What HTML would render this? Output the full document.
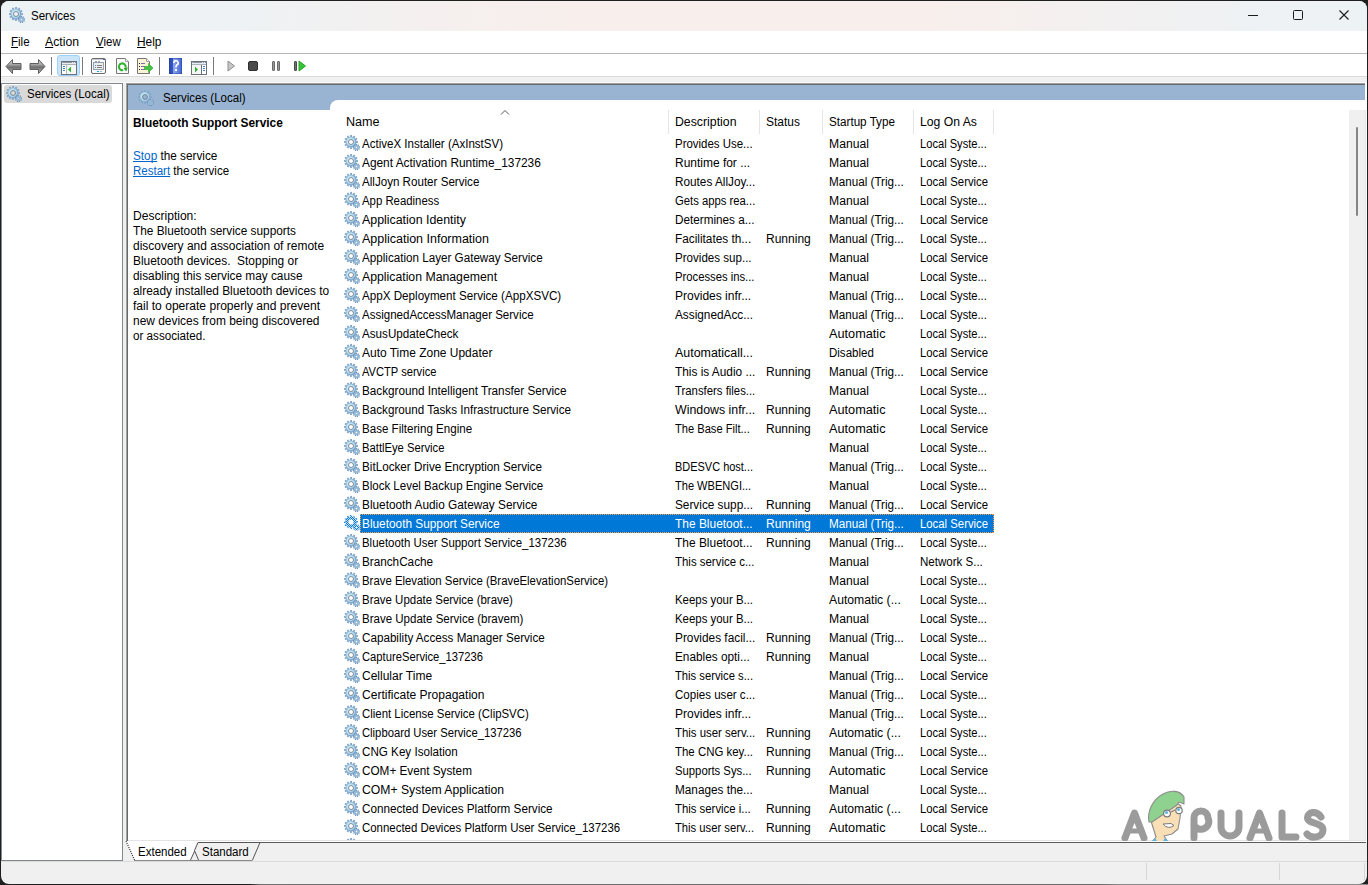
<!DOCTYPE html>
<html><head><meta charset="utf-8">
<style>
*{box-sizing:border-box}
html,body{margin:0;padding:0}
body{width:1368px;height:885px;background:#1f1f1f;position:relative;overflow:hidden;font-family:"Liberation Sans",sans-serif;font-size:12px;color:#000}
.win{position:absolute;left:0;top:0;width:1368px;height:885px;background:#f0f0f0;clip-path:inset(1px 1px 1px 1px round 8px);overflow:hidden}
.a{position:absolute}
.t{position:absolute;margin-top:1px;white-space:nowrap;line-height:15px;height:15px;transform:scaleX(0.96);transform-origin:0 0}
.e{letter-spacing:-0.4px}
.gi{position:absolute;width:16px;height:16px;overflow:visible}
.selbar{position:absolute;left:360px;width:634px;height:19px;background-color:#0078d7;background-image:repeating-linear-gradient(90deg,#f5a048 0 1px,transparent 1px 2px),repeating-linear-gradient(90deg,#f5a048 0 1px,transparent 1px 2px),repeating-linear-gradient(180deg,#f5a048 0 1px,transparent 1px 2px),repeating-linear-gradient(180deg,#f5a048 0 1px,transparent 1px 2px);background-size:100% 1px,100% 1px,1px 100%,1px 100%;background-position:0 0,0 100%,0 0,100% 0;background-repeat:no-repeat}
.sel .t{color:#fff}
u{text-decoration:underline;text-decoration-skip-ink:none}
</style></head><body>
<svg width="0" height="0" style="position:absolute">
<defs>
<radialGradient id="gr" cx="0.45" cy="0.45" r="0.6">
<stop offset="0" stop-color="#e6f8fd"/><stop offset="0.5" stop-color="#d2f0fa"/><stop offset="0.8" stop-color="#b2d8ee"/><stop offset="1" stop-color="#86adcf"/>
</radialGradient>
<linearGradient id="tg" gradientUnits="userSpaceOnUse" x1="0" y1="0" x2="0" y2="16"><stop offset="0" stop-color="#86a8ca"/><stop offset="1" stop-color="#4f7aa2"/></linearGradient>
<symbol id="gear" viewBox="0 0 16 16">
<g fill="url(#tg)"><rect x="6.15" y="0" width="1.8" height="2.3" transform="rotate(0 7 7)"/><rect x="6.15" y="0" width="1.8" height="2.3" transform="rotate(30 7 7)"/><rect x="6.15" y="0" width="1.8" height="2.3" transform="rotate(60 7 7)"/><rect x="6.15" y="0" width="1.8" height="2.3" transform="rotate(90 7 7)"/><rect x="6.15" y="0" width="1.8" height="2.3" transform="rotate(120 7 7)"/><rect x="6.15" y="0" width="1.8" height="2.3" transform="rotate(150 7 7)"/><rect x="6.15" y="0" width="1.8" height="2.3" transform="rotate(180 7 7)"/><rect x="6.15" y="0" width="1.8" height="2.3" transform="rotate(210 7 7)"/><rect x="6.15" y="0" width="1.8" height="2.3" transform="rotate(240 7 7)"/><rect x="6.15" y="0" width="1.8" height="2.3" transform="rotate(270 7 7)"/><rect x="6.15" y="0" width="1.8" height="2.3" transform="rotate(300 7 7)"/><rect x="6.15" y="0" width="1.8" height="2.3" transform="rotate(330 7 7)"/></g>
<circle cx="7" cy="7" r="4.05" fill="none" stroke="url(#gr)" stroke-width="3.1"/>
<circle cx="7" cy="7" r="2.5" fill="none" stroke="#62707e" stroke-width="0.8"/>
<g fill="#5f88b2"><rect x="11.95" y="8.9" width="1.1" height="1.9" transform="rotate(0 12.5 12.5)"/><rect x="11.95" y="8.9" width="1.1" height="1.9" transform="rotate(40 12.5 12.5)"/><rect x="11.95" y="8.9" width="1.1" height="1.9" transform="rotate(80 12.5 12.5)"/><rect x="11.95" y="8.9" width="1.1" height="1.9" transform="rotate(120 12.5 12.5)"/><rect x="11.95" y="8.9" width="1.1" height="1.9" transform="rotate(160 12.5 12.5)"/><rect x="11.95" y="8.9" width="1.1" height="1.9" transform="rotate(200 12.5 12.5)"/><rect x="11.95" y="8.9" width="1.1" height="1.9" transform="rotate(240 12.5 12.5)"/><rect x="11.95" y="8.9" width="1.1" height="1.9" transform="rotate(280 12.5 12.5)"/><rect x="11.95" y="8.9" width="1.1" height="1.9" transform="rotate(320 12.5 12.5)"/></g>
<circle cx="12.5" cy="12.5" r="1.8" fill="none" stroke="#94b8d6" stroke-width="2"/>
</symbol>
<pattern id="chk" patternUnits="userSpaceOnUse" width="2" height="2"><rect width="2" height="2" fill="#b9dcf0"/><rect width="1" height="1" fill="#0a78d6"/><rect x="1" y="1" width="1" height="1" fill="#0a78d6"/></pattern>
<symbol id="gsel" viewBox="0 0 16 16">
<g fill="url(#chk)"><rect x="6.1" y="0" width="1.8" height="2.3" transform="rotate(0 7 7)"/><rect x="6.1" y="0" width="1.8" height="2.3" transform="rotate(30 7 7)"/><rect x="6.1" y="0" width="1.8" height="2.3" transform="rotate(60 7 7)"/><rect x="6.1" y="0" width="1.8" height="2.3" transform="rotate(90 7 7)"/><rect x="6.1" y="0" width="1.8" height="2.3" transform="rotate(120 7 7)"/><rect x="6.1" y="0" width="1.8" height="2.3" transform="rotate(150 7 7)"/><rect x="6.1" y="0" width="1.8" height="2.3" transform="rotate(180 7 7)"/><rect x="6.1" y="0" width="1.8" height="2.3" transform="rotate(210 7 7)"/><rect x="6.1" y="0" width="1.8" height="2.3" transform="rotate(240 7 7)"/><rect x="6.1" y="0" width="1.8" height="2.3" transform="rotate(270 7 7)"/><rect x="6.1" y="0" width="1.8" height="2.3" transform="rotate(300 7 7)"/><rect x="6.1" y="0" width="1.8" height="2.3" transform="rotate(330 7 7)"/></g>
<circle cx="7" cy="7" r="4.05" fill="none" stroke="url(#chk)" stroke-width="3.1"/>
<g fill="url(#chk)"><rect x="11.95" y="8.9" width="1.1" height="1.9" transform="rotate(0 12.5 12.5)"/><rect x="11.95" y="8.9" width="1.1" height="1.9" transform="rotate(40 12.5 12.5)"/><rect x="11.95" y="8.9" width="1.1" height="1.9" transform="rotate(80 12.5 12.5)"/><rect x="11.95" y="8.9" width="1.1" height="1.9" transform="rotate(120 12.5 12.5)"/><rect x="11.95" y="8.9" width="1.1" height="1.9" transform="rotate(160 12.5 12.5)"/><rect x="11.95" y="8.9" width="1.1" height="1.9" transform="rotate(200 12.5 12.5)"/><rect x="11.95" y="8.9" width="1.1" height="1.9" transform="rotate(240 12.5 12.5)"/><rect x="11.95" y="8.9" width="1.1" height="1.9" transform="rotate(280 12.5 12.5)"/><rect x="11.95" y="8.9" width="1.1" height="1.9" transform="rotate(320 12.5 12.5)"/></g>
<circle cx="12.5" cy="12.5" r="1.8" fill="none" stroke="url(#chk)" stroke-width="2"/>
</symbol>
</defs>
</svg>
<div class="a" style="left:0;top:884px;width:1368px;height:1px;background:linear-gradient(90deg,#1f1f1f 0,#1f1f1f 250px,#707070 260px,#6a6a6a 1100px,#8a8a8a 1120px,#8a8a8a 1368px)"></div>
<div class="win">
  <!-- title bar -->
  <div class="a" style="left:0;top:0;width:1368px;height:31px;background:linear-gradient(90deg,#edf2f5 0%,#eef2f4 18%,#f4f0ef 30%,#f8efec 42%,#f8efec 68%,#f3f0f0 80%,#eef2f4 92%,#edf2f5 100%);border-top:1px solid #fbfcfd"></div>
  <svg class="gi" style="left:9px;top:7px"><use href="#gear"/></svg>
  <div class="t" style="left:31px;top:8px">Services</div>
  <div class="a" style="left:1248px;top:15px;width:10px;height:1px;background:#1a1a1a"></div>
  <div class="a" style="left:1293px;top:10px;width:10px;height:10px;border:1px solid #1a1a1a;border-radius:1.5px"></div>
  <svg class="a" style="left:1339px;top:10px" width="10" height="10"><path d="M0.5 0.5L9.5 9.5M9.5 0.5L0.5 9.5" stroke="#1a1a1a" stroke-width="1.1"/></svg>

  <!-- menu -->
  <div class="a" style="left:0;top:31px;width:1368px;height:22px;background:#fff"></div>
  <div class="a" style="left:0;top:53px;width:1368px;height:1px;background:#b8b8b8"></div>
  <div class="t" style="left:11px;top:34px"><u>F</u>ile</div>
  <div class="t" style="left:45px;top:34px;transform:scaleX(1.02)"><u>A</u>ction</div>
  <div class="t" style="left:96px;top:34px"><u>V</u>iew</div>
  <div class="t" style="left:137px;top:34px;transform:scaleX(0.99)"><u>H</u>elp</div>

  <!-- toolbar -->
  <div class="a" style="left:0;top:54px;width:1368px;height:22px;background:#fff"></div>
  <div class="a" style="left:0;top:76px;width:1368px;height:1px;background:#dadada"></div>
  <svg class="a" style="left:5px;top:58px" width="18" height="17" viewBox="0 0 18 17"><defs><linearGradient id="ag" x1="0" y1="0" x2="0" y2="1"><stop offset="0" stop-color="#dadada"/><stop offset="0.35" stop-color="#a8a8a8"/><stop offset="0.55" stop-color="#6e6e6e"/><stop offset="1" stop-color="#c4c4c4"/></linearGradient></defs><path d="M1 8.5L7.5 1.5V5.5H16V11.5H7.5V15.5Z" fill="url(#ag)" stroke="#5f5f5f" stroke-width="1" stroke-linejoin="round"/></svg>
<svg class="a" style="left:28px;top:58px" width="18" height="17" viewBox="0 0 18 17"><path d="M17 8.5L10.5 1.5V5.5H2V11.5H10.5V15.5Z" fill="url(#ag)" stroke="#5f5f5f" stroke-width="1" stroke-linejoin="round"/></svg>
<div class="a" style="left:51px;top:57px;width:1px;height:18px;background:#7a7a7a"></div>
<div class="a" style="left:57px;top:55px;width:23px;height:21px;background:#cce4f7;border:1px solid #99d1ff;border-radius:3px"></div>
<svg class="a" style="left:61px;top:61px" width="16" height="14" viewBox="0 0 16 14"><rect x="0.5" y="0.5" width="15" height="13" fill="#f7f7f7" stroke="#6b717b"/><rect x="1" y="1" width="14" height="2" fill="#e9ecf0"/><line x1="1.5" y1="1.5" x2="11" y2="1.5" stroke="#8d96a3"/><rect x="12" y="1" width="1" height="1" fill="#8d96a3"/><rect x="14" y="1" width="1" height="1" fill="#8d96a3"/><line x1="1" y1="3.5" x2="15" y2="3.5" stroke="#aab1bb"/><line x1="5.5" y1="4" x2="5.5" y2="13" stroke="#6b717b"/><rect x="1" y="4" width="4.5" height="9" fill="#fff"/><rect x="2" y="5" width="2" height="1" fill="#3c7fc4"/><rect x="2" y="7" width="2" height="1" fill="#3c7fc4"/><rect x="2" y="9" width="2" height="1" fill="#3c7fc4"/><path d="M10 5.5V11.5L7 8.5Z" fill="#2db52d"/></svg>
<div class="a" style="left:82px;top:57px;width:1px;height:18px;background:#7a7a7a"></div>
<svg class="a" style="left:91px;top:58px" width="15" height="16" viewBox="0 0 15 16"><rect x="0.5" y="0.5" width="14" height="15" rx="1.5" fill="#fbfbfb" stroke="#6a6a6a"/><rect x="1" y="1" width="13" height="1" fill="#c8ccd2"/><rect x="12" y="1" width="2" height="1" fill="#4a6fb0"/><rect x="2.5" y="4.5" width="10" height="7" fill="#e9ecf1" stroke="#9aa1ad"/><rect x="4" y="3" width="2" height="1" fill="#9aa1ad"/><rect x="7" y="3" width="2" height="1" fill="#9aa1ad"/><rect x="4" y="7" width="1" height="1" fill="#19a3ef"/><rect x="6" y="7" width="5" height="1" fill="#808080"/><rect x="4" y="9" width="1" height="1" fill="#808080"/><rect x="6" y="9" width="5" height="1" fill="#808080"/><rect x="6" y="13" width="2" height="1" fill="#19a3ef"/><rect x="9" y="13" width="2" height="1" fill="#b0b0b0"/></svg>
<svg class="a" style="left:116px;top:58px" width="13" height="16" viewBox="0 0 13 16"><path d="M0.5 0.5H9.5L12.5 3.5V15.5H0.5Z" fill="#f9f9f9" stroke="#767676"/><path d="M9.5 0.5V3.5H12.5" fill="#fff" stroke="#a0a0a0"/><circle cx="6.3" cy="8.8" r="3.4" fill="none" stroke="#33b433" stroke-width="2.1" stroke-dasharray="17.5 4" transform="rotate(75 6.3 8.8)"/><path d="M7.5 10.2L11.8 9.6L10.2 13.6Z" fill="#2aa82a"/></svg>
<svg class="a" style="left:137px;top:58px" width="17" height="16" viewBox="0 0 17 16"><path d="M0.5 0.5H9.5L12.5 3.5V15.5H0.5Z" fill="#fbf3d6" stroke="#767676"/><path d="M9.5 0.5V3.5H12.5" fill="#fff" stroke="#a0a0a0"/><rect x="2" y="5" width="1" height="1" fill="#222"/><rect x="4" y="5" width="4" height="1" fill="#7b6fb6"/><rect x="2" y="8" width="1" height="1" fill="#222"/><rect x="4" y="8" width="4" height="1" fill="#7b6fb6"/><rect x="2" y="11" width="1" height="1" fill="#222"/><rect x="4" y="11" width="4" height="1" fill="#7b6fb6"/><path d="M7.5 8.5H11.5V5.5L16 10L11.5 14.5V11.5H7.5Z" fill="#40c340" stroke="#2da82d" stroke-width="0.6"/></svg>
<div class="a" style="left:159px;top:57px;width:1px;height:18px;background:#7a7a7a"></div>
<svg class="a" style="left:169px;top:58px" width="13" height="16" viewBox="0 0 13 16"><defs><linearGradient id="hg" x1="0" y1="0" x2="1" y2="0"><stop offset="0" stop-color="#2a49b0"/><stop offset="0.3" stop-color="#3556c0"/><stop offset="0.35" stop-color="#8da6ee"/><stop offset="1" stop-color="#3f63cf"/></linearGradient></defs><rect x="0" y="0" width="13" height="16" fill="url(#hg)" stroke="#1e3a98" stroke-width="0.8"/><path d="M4.8 5A2.2 2.2 0 1 1 7.8 7C7 7.6 7 8 7 9.5" fill="none" stroke="#fff" stroke-width="1.6"/><rect x="6" y="11" width="2" height="2" fill="#fff"/></svg>
<svg class="a" style="left:191px;top:61px" width="16" height="14" viewBox="0 0 16 14"><rect x="0.5" y="0.5" width="15" height="13" fill="#f7f7f7" stroke="#6b717b"/><rect x="1" y="1" width="14" height="2" fill="#e9ecf0"/><line x1="1.5" y1="1.5" x2="11" y2="1.5" stroke="#8d96a3"/><rect x="12" y="1" width="1" height="1" fill="#8d96a3"/><rect x="14" y="1" width="1" height="1" fill="#8d96a3"/><line x1="1" y1="3.5" x2="15" y2="3.5" stroke="#aab1bb"/><line x1="10.5" y1="4" x2="10.5" y2="13" stroke="#6b717b"/><rect x="11" y="4" width="4" height="9" fill="#fff"/><rect x="12" y="5" width="2" height="1" fill="#3c7fc4"/><rect x="12" y="7" width="2" height="1" fill="#3c7fc4"/><rect x="12" y="9" width="2" height="1" fill="#3c7fc4"/><path d="M4 5.5V11.5L7 8.5Z" fill="#2db52d"/></svg>
<div class="a" style="left:213px;top:57px;width:1px;height:18px;background:#7a7a7a"></div>
<svg class="a" style="left:227px;top:60px" width="9" height="12" viewBox="0 0 9 12"><path d="M1 1L7.5 6L1 11Z" fill="#c8c8c8" stroke="#8c8c8c" stroke-width="1" stroke-linejoin="round"/></svg>
<div class="a" style="left:248px;top:61px;width:10px;height:10px;background:#4a4a4a;border:1px solid #2f2f2f;border-radius:2px"></div>
<div class="a" style="left:272px;top:61px;width:3px;height:10px;background:#9a9a9a;border:1px solid #6a6a6a;border-radius:1px"></div>
<div class="a" style="left:277px;top:61px;width:3px;height:10px;background:#9a9a9a;border:1px solid #6a6a6a;border-radius:1px"></div>
<div class="a" style="left:294px;top:61px;width:3px;height:10px;background:#707070;border:1px solid #4a4a4a;border-radius:1px"></div>
<svg class="a" style="left:298px;top:60px" width="9" height="12" viewBox="0 0 9 12"><path d="M1 1L7.5 6L1 11Z" fill="#38c438" stroke="#23a523" stroke-width="1" stroke-linejoin="round"/></svg>


  <div class="a" style="left:0;top:82px;width:1368px;height:1px;background:#f8f8f8"></div>
  <!-- tree pane -->
  <div class="a" style="left:1px;top:83px;width:122px;height:778px;background:#fff;border:1px solid #828790"></div>
  <div class="a" style="left:4px;top:85px;width:108px;height:18px;background:#d9d9d9;border-radius:3px"></div>
  <svg class="gi" style="left:6px;top:86px"><use href="#gear"/></svg>
  <div class="t" style="left:27px;top:86px">Services (Local)</div>

  <!-- right pane -->
  <div class="a" style="left:126px;top:83px;width:1241px;height:759px;background:#fff;border-left:1px solid #a0a0a0"></div><div class="a" style="left:126px;top:83px;width:1239px;height:1px;background:#a0a0a0"></div>
  <div class="a" style="left:127px;top:84px;width:1px;height:757px;background:#696969"></div><div class="a" style="left:127px;top:84px;width:1238px;height:1px;background:#696969"></div>
  <div class="a" style="left:128px;top:85px;width:1237px;height:25px;background:#99b4d2"></div>
  <div class="a" style="left:330px;top:100px;width:1036px;height:12px;background:#fff;border-top-left-radius:8px"></div>
  <svg class="gi" style="left:138px;top:90px"><use href="#gear"/></svg>
  <div class="t" style="left:163px;top:90px">Services (Local)</div>

  <!-- extended detail -->
  <div class="t" style="left:133px;top:115px;font-weight:bold;transform:scaleX(0.99)">Bluetooth Support Service</div>
  <div class="t" style="left:133px;top:148px;transform:scaleX(0.98)"><u style="color:#0066cc">Stop</u> the service</div>
  <div class="t" style="left:133px;top:163px"><u style="color:#0066cc">Restart</u> the service</div>
  <div class="t" style="left:133px;top:208px;transform:scaleX(1.005)">Description:</div>
  <div class="t" style="left:133px;top:223px;transform:scaleX(0.985)">The Bluetooth service supports</div>
  <div class="t" style="left:133px;top:238px;transform:scaleX(0.998)">discovery and association of remote</div>
  <div class="t" style="left:133px;top:253px;transform:scaleX(0.994)">Bluetooth devices.&nbsp; Stopping or</div>
  <div class="t" style="left:133px;top:268px;transform:scaleX(0.985)">disabling this service may cause</div>
  <div class="t" style="left:133px;top:283px;transform:scaleX(0.99)">already installed Bluetooth devices to</div>
  <div class="t" style="left:133px;top:298px;transform:scaleX(1.005)">fail to operate properly and prevent</div>
  <div class="t" style="left:133px;top:313px;transform:scaleX(0.995)">new devices from being discovered</div>
  <div class="t" style="left:133px;top:328px;transform:scaleX(0.97)">or associated.</div>

  <!-- list header -->
  <div class="t" style="left:346px;top:114px;transform:scaleX(1.05)">Name</div>
  <svg class="a" style="left:500px;top:109px" width="10" height="7"><path d="M1 5.5L5 1.5L9 5.5" fill="none" stroke="#555" stroke-width="1"/></svg>
  <div class="a" style="left:668px;top:110px;width:1px;height:24px;background:#e5e5e5"></div>
  <div class="t" style="left:675px;top:114px;transform:scaleX(1.024)">Description</div>
  <div class="a" style="left:759px;top:110px;width:1px;height:24px;background:#e5e5e5"></div>
  <div class="t" style="left:766px;top:114px;transform:scaleX(0.998)">Status</div>
  <div class="a" style="left:822px;top:110px;width:1px;height:24px;background:#e5e5e5"></div>
  <div class="t" style="left:829px;top:114px;transform:scaleX(0.972)">Startup Type</div>
  <div class="a" style="left:913px;top:110px;width:1px;height:24px;background:#e5e5e5"></div>
  <div class="t" style="left:920px;top:114px;transform:scaleX(1.016)">Log On As</div>
  <div class="a" style="left:993px;top:110px;width:1px;height:24px;background:#e5e5e5"></div>

  <!-- rows -->
  <div class="a" style="left:128px;top:133px;width:1221px;height:707px;overflow:hidden">
   <div class="a" style="left:-128px;top:-133px;width:1368px;height:885px">
<svg class="gi" style="left:344px;top:135px"><use href="#gear"/></svg><div class="t" style="left:362px;top:136px;transform:scaleX(0.9614)">ActiveX Installer (AxInstSV)</div><div class="t" style="left:675px;top:136px;transform:scaleX(0.9538)">Provides Use...</div><div class="t" style="left:829px;top:136px;transform:scaleX(1.0137)">Manual</div><div class="t" style="left:920px;top:136px;transform:scaleX(0.9272)">Local Syste...</div>
<svg class="gi" style="left:344px;top:154px"><use href="#gear"/></svg><div class="t" style="left:362px;top:155px;transform:scaleX(0.9890)">Agent Activation Runtime_137236</div><div class="t" style="left:675px;top:155px;transform:scaleX(0.9973)">Runtime for ...</div><div class="t" style="left:829px;top:155px;transform:scaleX(1.0137)">Manual</div><div class="t" style="left:920px;top:155px;transform:scaleX(0.9272)">Local Syste...</div>
<svg class="gi" style="left:344px;top:173px"><use href="#gear"/></svg><div class="t" style="left:362px;top:174px;transform:scaleX(0.9667)">AllJoyn Router Service</div><div class="t" style="left:675px;top:174px;transform:scaleX(0.9811)">Routes AllJoy...</div><div class="t" style="left:829px;top:174px;transform:scaleX(0.9724)">Manual (Trig...</div><div class="t" style="left:920px;top:174px;transform:scaleX(0.9452)">Local Service</div>
<svg class="gi" style="left:344px;top:192px"><use href="#gear"/></svg><div class="t" style="left:362px;top:193px;transform:scaleX(0.9475)">App Readiness</div><div class="t" style="left:675px;top:193px;transform:scaleX(0.9402)">Gets apps rea...</div><div class="t" style="left:829px;top:193px;transform:scaleX(1.0137)">Manual</div><div class="t" style="left:920px;top:193px;transform:scaleX(0.9272)">Local Syste...</div>
<svg class="gi" style="left:344px;top:211px"><use href="#gear"/></svg><div class="t" style="left:362px;top:212px;transform:scaleX(1.0319)">Application Identity</div><div class="t" style="left:675px;top:212px;transform:scaleX(0.9765)">Determines a...</div><div class="t" style="left:829px;top:212px;transform:scaleX(0.9724)">Manual (Trig...</div><div class="t" style="left:920px;top:212px;transform:scaleX(0.9452)">Local Service</div>
<svg class="gi" style="left:344px;top:230px"><use href="#gear"/></svg><div class="t" style="left:362px;top:231px;transform:scaleX(1.0402)">Application Information</div><div class="t" style="left:675px;top:231px;transform:scaleX(0.9846)">Facilitates th...</div><div class="t" style="left:766px;top:231px;transform:scaleX(1.0022)">Running</div><div class="t" style="left:829px;top:231px;transform:scaleX(0.9724)">Manual (Trig...</div><div class="t" style="left:920px;top:231px;transform:scaleX(0.9272)">Local Syste...</div>
<svg class="gi" style="left:344px;top:249px"><use href="#gear"/></svg><div class="t" style="left:362px;top:250px;transform:scaleX(0.9708)">Application Layer Gateway Service</div><div class="t" style="left:675px;top:250px;transform:scaleX(0.9649)">Provides sup...</div><div class="t" style="left:829px;top:250px;transform:scaleX(1.0137)">Manual</div><div class="t" style="left:920px;top:250px;transform:scaleX(0.9452)">Local Service</div>
<svg class="gi" style="left:344px;top:268px"><use href="#gear"/></svg><div class="t" style="left:362px;top:269px;transform:scaleX(1.0224)">Application Management</div><div class="t" style="left:675px;top:269px;transform:scaleX(0.9382)">Processes ins...</div><div class="t" style="left:829px;top:269px;transform:scaleX(1.0137)">Manual</div><div class="t" style="left:920px;top:269px;transform:scaleX(0.9272)">Local Syste...</div>
<svg class="gi" style="left:344px;top:287px"><use href="#gear"/></svg><div class="t" style="left:362px;top:288px;transform:scaleX(0.9698)">AppX Deployment Service (AppXSVC)</div><div class="t" style="left:675px;top:288px;transform:scaleX(1.0019)">Provides infr...</div><div class="t" style="left:829px;top:288px;transform:scaleX(0.9724)">Manual (Trig...</div><div class="t" style="left:920px;top:288px;transform:scaleX(0.9272)">Local Syste...</div>
<svg class="gi" style="left:344px;top:306px"><use href="#gear"/></svg><div class="t" style="left:362px;top:307px;transform:scaleX(0.9600)">AssignedAccessManager Service</div><div class="t" style="left:675px;top:307px;transform:scaleX(0.9830)">AssignedAcc...</div><div class="t" style="left:829px;top:307px;transform:scaleX(0.9724)">Manual (Trig...</div><div class="t" style="left:920px;top:307px;transform:scaleX(0.9272)">Local Syste...</div>
<svg class="gi" style="left:344px;top:325px"><use href="#gear"/></svg><div class="t" style="left:362px;top:326px;transform:scaleX(0.9702)">AsusUpdateCheck</div><div class="t" style="left:829px;top:326px;transform:scaleX(1.0589)">Automatic</div><div class="t" style="left:920px;top:326px;transform:scaleX(0.9272)">Local Syste...</div>
<svg class="gi" style="left:344px;top:344px"><use href="#gear"/></svg><div class="t" style="left:362px;top:345px;transform:scaleX(0.9972)">Auto Time Zone Updater</div><div class="t" style="left:675px;top:345px;transform:scaleX(1.0352)">Automaticall...</div><div class="t" style="left:829px;top:345px;transform:scaleX(0.9593)">Disabled</div><div class="t" style="left:920px;top:345px;transform:scaleX(0.9452)">Local Service</div>
<svg class="gi" style="left:344px;top:363px"><use href="#gear"/></svg><div class="t" style="left:362px;top:364px;transform:scaleX(0.9272)">AVCTP service</div><div class="t" style="left:675px;top:364px;transform:scaleX(0.9866)">This is Audio ...</div><div class="t" style="left:766px;top:364px;transform:scaleX(1.0022)">Running</div><div class="t" style="left:829px;top:364px;transform:scaleX(0.9724)">Manual (Trig...</div><div class="t" style="left:920px;top:364px;transform:scaleX(0.9452)">Local Service</div>
<svg class="gi" style="left:344px;top:382px"><use href="#gear"/></svg><div class="t" style="left:362px;top:383px;transform:scaleX(0.9763)">Background Intelligent Transfer Service</div><div class="t" style="left:675px;top:383px;transform:scaleX(0.9454)">Transfers files...</div><div class="t" style="left:829px;top:383px;transform:scaleX(1.0137)">Manual</div><div class="t" style="left:920px;top:383px;transform:scaleX(0.9272)">Local Syste...</div>
<svg class="gi" style="left:344px;top:401px"><use href="#gear"/></svg><div class="t" style="left:362px;top:402px;transform:scaleX(0.9712)">Background Tasks Infrastructure Service</div><div class="t" style="left:675px;top:402px;transform:scaleX(1.0289)">Windows infr...</div><div class="t" style="left:766px;top:402px;transform:scaleX(1.0022)">Running</div><div class="t" style="left:829px;top:402px;transform:scaleX(1.0589)">Automatic</div><div class="t" style="left:920px;top:402px;transform:scaleX(0.9272)">Local Syste...</div>
<svg class="gi" style="left:344px;top:420px"><use href="#gear"/></svg><div class="t" style="left:362px;top:421px;transform:scaleX(0.9653)">Base Filtering Engine</div><div class="t" style="left:675px;top:421px;transform:scaleX(0.9261)">The Base Filt...</div><div class="t" style="left:766px;top:421px;transform:scaleX(1.0022)">Running</div><div class="t" style="left:829px;top:421px;transform:scaleX(1.0589)">Automatic</div><div class="t" style="left:920px;top:421px;transform:scaleX(0.9452)">Local Service</div>
<svg class="gi" style="left:344px;top:439px"><use href="#gear"/></svg><div class="t" style="left:362px;top:440px;transform:scaleX(0.9369)">BattlEye Service</div><div class="t" style="left:829px;top:440px;transform:scaleX(1.0137)">Manual</div><div class="t" style="left:920px;top:440px;transform:scaleX(0.9272)">Local Syste...</div>
<svg class="gi" style="left:344px;top:458px"><use href="#gear"/></svg><div class="t" style="left:362px;top:459px;transform:scaleX(0.9742)">BitLocker Drive Encryption Service</div><div class="t" style="left:675px;top:459px;transform:scaleX(0.9139)">BDESVC host...</div><div class="t" style="left:829px;top:459px;transform:scaleX(0.9724)">Manual (Trig...</div><div class="t" style="left:920px;top:459px;transform:scaleX(0.9272)">Local Syste...</div>
<svg class="gi" style="left:344px;top:477px"><use href="#gear"/></svg><div class="t" style="left:362px;top:478px;transform:scaleX(0.9600)">Block Level Backup Engine Service</div><div class="t" style="left:675px;top:478px;transform:scaleX(0.9213)">The WBENGI...</div><div class="t" style="left:829px;top:478px;transform:scaleX(1.0137)">Manual</div><div class="t" style="left:920px;top:478px;transform:scaleX(0.9272)">Local Syste...</div>
<svg class="gi" style="left:344px;top:496px"><use href="#gear"/></svg><div class="t" style="left:362px;top:497px;transform:scaleX(0.9850)">Bluetooth Audio Gateway Service</div><div class="t" style="left:675px;top:497px;transform:scaleX(0.9830)">Service supp...</div><div class="t" style="left:766px;top:497px;transform:scaleX(1.0022)">Running</div><div class="t" style="left:829px;top:497px;transform:scaleX(0.9724)">Manual (Trig...</div><div class="t" style="left:920px;top:497px;transform:scaleX(0.9452)">Local Service</div>
<div class="selbar" style="top:514px"></div>
<svg class="gi" style="left:344px;top:515px"><use href="#gsel"/></svg><div class="t" style="left:362px;top:516px;transform:scaleX(0.9860);color:#fff">Bluetooth Support Service</div><div class="t" style="left:675px;top:516px;transform:scaleX(0.9945);color:#fff">The Bluetoot...</div><div class="t" style="left:766px;top:516px;transform:scaleX(1.0022);color:#fff">Running</div><div class="t" style="left:829px;top:516px;transform:scaleX(0.9724);color:#fff">Manual (Trig...</div><div class="t" style="left:920px;top:516px;transform:scaleX(0.9452);color:#fff">Local Service</div>
<svg class="gi" style="left:344px;top:534px"><use href="#gear"/></svg><div class="t" style="left:362px;top:535px;transform:scaleX(0.9525)">Bluetooth User Support Service_137236</div><div class="t" style="left:675px;top:535px;transform:scaleX(0.9945)">The Bluetoot...</div><div class="t" style="left:766px;top:535px;transform:scaleX(1.0022)">Running</div><div class="t" style="left:829px;top:535px;transform:scaleX(0.9724)">Manual (Trig...</div><div class="t" style="left:920px;top:535px;transform:scaleX(0.9272)">Local Syste...</div>
<svg class="gi" style="left:344px;top:553px"><use href="#gear"/></svg><div class="t" style="left:362px;top:554px;transform:scaleX(0.9769)">BranchCache</div><div class="t" style="left:675px;top:554px;transform:scaleX(0.9533)">This service c...</div><div class="t" style="left:829px;top:554px;transform:scaleX(1.0137)">Manual</div><div class="t" style="left:920px;top:554px;transform:scaleX(0.9608)">Network S...</div>
<svg class="gi" style="left:344px;top:572px"><use href="#gear"/></svg><div class="t" style="left:362px;top:573px;transform:scaleX(0.9483)">Brave Elevation Service (BraveElevationService)</div><div class="t" style="left:829px;top:573px;transform:scaleX(1.0137)">Manual</div><div class="t" style="left:920px;top:573px;transform:scaleX(0.9272)">Local Syste...</div>
<svg class="gi" style="left:344px;top:591px"><use href="#gear"/></svg><div class="t" style="left:362px;top:592px;transform:scaleX(0.9549)">Brave Update Service (brave)</div><div class="t" style="left:675px;top:592px;transform:scaleX(0.9510)">Keeps your B...</div><div class="t" style="left:829px;top:592px;transform:scaleX(1.0157)">Automatic (...</div><div class="t" style="left:920px;top:592px;transform:scaleX(0.9272)">Local Syste...</div>
<svg class="gi" style="left:344px;top:610px"><use href="#gear"/></svg><div class="t" style="left:362px;top:611px;transform:scaleX(0.9600)">Brave Update Service (bravem)</div><div class="t" style="left:675px;top:611px;transform:scaleX(0.9510)">Keeps your B...</div><div class="t" style="left:829px;top:611px;transform:scaleX(1.0137)">Manual</div><div class="t" style="left:920px;top:611px;transform:scaleX(0.9272)">Local Syste...</div>
<svg class="gi" style="left:344px;top:629px"><use href="#gear"/></svg><div class="t" style="left:362px;top:630px;transform:scaleX(0.9718)">Capability Access Manager Service</div><div class="t" style="left:675px;top:630px;transform:scaleX(0.9866)">Provides facil...</div><div class="t" style="left:766px;top:630px;transform:scaleX(1.0022)">Running</div><div class="t" style="left:829px;top:630px;transform:scaleX(0.9724)">Manual (Trig...</div><div class="t" style="left:920px;top:630px;transform:scaleX(0.9272)">Local Syste...</div>
<svg class="gi" style="left:344px;top:648px"><use href="#gear"/></svg><div class="t" style="left:362px;top:649px;transform:scaleX(0.9351)">CaptureService_137236</div><div class="t" style="left:675px;top:649px;transform:scaleX(0.9827)">Enables opti...</div><div class="t" style="left:766px;top:649px;transform:scaleX(1.0022)">Running</div><div class="t" style="left:829px;top:649px;transform:scaleX(1.0137)">Manual</div><div class="t" style="left:920px;top:649px;transform:scaleX(0.9272)">Local Syste...</div>
<svg class="gi" style="left:344px;top:667px"><use href="#gear"/></svg><div class="t" style="left:362px;top:668px;transform:scaleX(1.0007)">Cellular Time</div><div class="t" style="left:675px;top:668px;transform:scaleX(0.9360)">This service s...</div><div class="t" style="left:829px;top:668px;transform:scaleX(0.9724)">Manual (Trig...</div><div class="t" style="left:920px;top:668px;transform:scaleX(0.9452)">Local Service</div>
<svg class="gi" style="left:344px;top:686px"><use href="#gear"/></svg><div class="t" style="left:362px;top:687px;transform:scaleX(1.0034)">Certificate Propagation</div><div class="t" style="left:675px;top:687px;transform:scaleX(0.9629)">Copies user c...</div><div class="t" style="left:829px;top:687px;transform:scaleX(0.9724)">Manual (Trig...</div><div class="t" style="left:920px;top:687px;transform:scaleX(0.9272)">Local Syste...</div>
<svg class="gi" style="left:344px;top:705px"><use href="#gear"/></svg><div class="t" style="left:362px;top:706px;transform:scaleX(0.9508)">Client License Service (ClipSVC)</div><div class="t" style="left:675px;top:706px;transform:scaleX(1.0019)">Provides infr...</div><div class="t" style="left:829px;top:706px;transform:scaleX(0.9724)">Manual (Trig...</div><div class="t" style="left:920px;top:706px;transform:scaleX(0.9272)">Local Syste...</div>
<svg class="gi" style="left:344px;top:724px"><use href="#gear"/></svg><div class="t" style="left:362px;top:725px;transform:scaleX(0.9375)">Clipboard User Service_137236</div><div class="t" style="left:675px;top:725px;transform:scaleX(0.9505)">This user serv...</div><div class="t" style="left:766px;top:725px;transform:scaleX(1.0022)">Running</div><div class="t" style="left:829px;top:725px;transform:scaleX(1.0157)">Automatic (...</div><div class="t" style="left:920px;top:725px;transform:scaleX(0.9272)">Local Syste...</div>
<svg class="gi" style="left:344px;top:743px"><use href="#gear"/></svg><div class="t" style="left:362px;top:744px;transform:scaleX(0.9703)">CNG Key Isolation</div><div class="t" style="left:675px;top:744px;transform:scaleX(0.9539)">The CNG key...</div><div class="t" style="left:766px;top:744px;transform:scaleX(1.0022)">Running</div><div class="t" style="left:829px;top:744px;transform:scaleX(0.9724)">Manual (Trig...</div><div class="t" style="left:920px;top:744px;transform:scaleX(0.9272)">Local Syste...</div>
<svg class="gi" style="left:344px;top:762px"><use href="#gear"/></svg><div class="t" style="left:362px;top:763px;transform:scaleX(0.9781)">COM+ Event System</div><div class="t" style="left:675px;top:763px;transform:scaleX(0.9412)">Supports Sys...</div><div class="t" style="left:766px;top:763px;transform:scaleX(1.0022)">Running</div><div class="t" style="left:829px;top:763px;transform:scaleX(1.0589)">Automatic</div><div class="t" style="left:920px;top:763px;transform:scaleX(0.9452)">Local Service</div>
<svg class="gi" style="left:344px;top:781px"><use href="#gear"/></svg><div class="t" style="left:362px;top:782px;transform:scaleX(1.0167)">COM+ System Application</div><div class="t" style="left:675px;top:782px;transform:scaleX(0.9802)">Manages the...</div><div class="t" style="left:829px;top:782px;transform:scaleX(1.0137)">Manual</div><div class="t" style="left:920px;top:782px;transform:scaleX(0.9272)">Local Syste...</div>
<svg class="gi" style="left:344px;top:800px"><use href="#gear"/></svg><div class="t" style="left:362px;top:801px;transform:scaleX(0.9755)">Connected Devices Platform Service</div><div class="t" style="left:675px;top:801px;transform:scaleX(0.9469)">This service i...</div><div class="t" style="left:766px;top:801px;transform:scaleX(1.0022)">Running</div><div class="t" style="left:829px;top:801px;transform:scaleX(1.0157)">Automatic (...</div><div class="t" style="left:920px;top:801px;transform:scaleX(0.9452)">Local Service</div>
<svg class="gi" style="left:344px;top:819px"><use href="#gear"/></svg><div class="t" style="left:362px;top:820px;transform:scaleX(0.9533)">Connected Devices Platform User Service_137236</div><div class="t" style="left:675px;top:820px;transform:scaleX(0.9359)">This user serv...</div><div class="t" style="left:766px;top:820px;transform:scaleX(1.0022)">Running</div><div class="t" style="left:829px;top:820px;transform:scaleX(1.0589)">Automatic</div><div class="t" style="left:920px;top:820px;transform:scaleX(0.9272)">Local Syste...</div>
<svg class="gi" style="left:344px;top:838px"><use href="#gear"/></svg>
   </div>
  </div>

  <!-- scrollbar -->
  <div class="a" style="left:1349px;top:110px;width:17px;height:731px;background:#f0f0f0;border-right:1px solid #e6e6e6;border-bottom:1px solid #e6e6e6"></div>
  <div class="a" style="left:1356px;top:127px;width:2px;height:89px;background:#858585;border-radius:1px"></div>

  <!-- list bottom line -->
  <div class="a" style="left:128px;top:840px;width:1221px;height:1px;background:#e3e3e3"></div>

  <!-- tabs -->
  <svg class="a" style="left:120px;top:838px" width="160" height="25" viewBox="0 0 160 25">
<path d="M6 3L14.5 22H70.5L77 3Z" fill="#fff"/>
<path d="M6 3L14.5 22" stroke="#333" stroke-width="1.1" stroke-dasharray="1.1 1.1"/>
<path d="M70.5 22L75 12.5" stroke="#555" stroke-width="1"/>
<path d="M78.5 22L74.5 12.5L78 4.5H140L132.5 22" fill="#f0f0f0" stroke="#555" stroke-width="1"/>
<path d="M140 4.5H160" stroke="#5a5a5a" stroke-width="1"/>
<path d="M14 22.5H132.5" stroke="#8a8a8a" stroke-width="1"/>
</svg>
<div class="a" style="left:260px;top:842px;width:1106px;height:1px;background:#5a5a5a"></div>
<div class="t" style="left:138px;top:844px">Extended</div>
<div class="t" style="left:202px;top:844px">Standard</div>


  <!-- status bar -->
  <div class="a" style="left:0;top:861px;width:1368px;height:1px;background:#dadada"></div>
  <div class="a" style="left:1146px;top:863px;width:1px;height:17px;background:#d7d7d7"></div>
  <div class="a" style="left:1279px;top:863px;width:1px;height:17px;background:#d7d7d7"></div>
  <div class="a" style="left:1364px;top:863px;width:1px;height:17px;background:#d7d7d7"></div>

  <svg class="a" style="left:1110px;top:785px" width="230" height="56" viewBox="1110 785 230 56">
<g fill="none" stroke="#9b9b9b" stroke-width="7" stroke-linecap="round" stroke-linejoin="round">
<path d="M1125 838L1134.5 813L1144 838"/>
<path d="M1194 838V818A7 7 0 0 1 1208 818A7 7 0 0 1 1194 825"/>
<path d="M1221 813V827A9 9 0 0 0 1239 827V813"/>
<path d="M1250 838L1259.5 813L1269 838"/>
<path d="M1282 813V837H1296"/>
<path d="M1321 817C1317 811 1308 811 1307.5 817.5C1307 824 1323 822 1323 830C1323 838 1311 839 1307 834"/>
</g>
<path d="M1128 831H1141M1253 831H1266" stroke="#9b9b9b" stroke-width="5"/>
<path d="M1151 821L1156 837L1152 842H1168L1164 836L1172 834L1178 829L1180 818L1181 806L1176 802L1151 818Z" fill="#f9dfb6" stroke="#8c8c8c" stroke-width="1.1" stroke-linejoin="round"/>
<path d="M1149 822C1147 812 1152 800 1163 794C1170 790 1180 790 1184 797L1184 804L1179 802L1177 805L1152 822Z" fill="#8fd18f" stroke="#8c8c8c" stroke-width="1.1" stroke-linejoin="round"/>
<path d="M1171 812L1175 810" stroke="#808080" stroke-width="1.2"/>
<circle cx="1167" cy="813.5" r="3.4" fill="#fff" stroke="#7a7a7a" stroke-width="1.2"/>
<circle cx="1179" cy="810.5" r="3.2" fill="#fff" stroke="#7a7a7a" stroke-width="1.2"/>
<circle cx="1166.5" cy="812.5" r="1.6" fill="#5fb3e3"/>
<circle cx="1178.5" cy="809.5" r="1.5" fill="#5fb3e3"/>
<path d="M1163 824Q1168 830 1174 825.5L1171 823.5Z" fill="#fff" stroke="#7a7a7a" stroke-width="1"/>
<path d="M1152 841L1155 838L1157 841Z M1163 841L1165 838L1168 841Z" fill="#5db6e6"/>
</svg>

</div>
</body></html>
